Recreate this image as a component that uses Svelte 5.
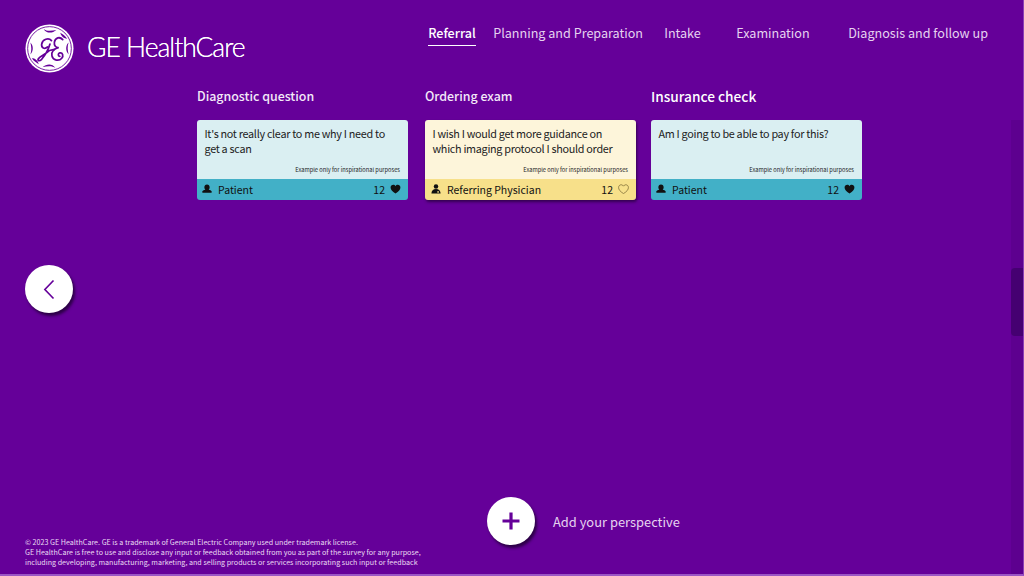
<script lang="ts">
	const navItems = [
		{ label: 'Referral', active: true },
		{ label: 'Planning and Preparation' },
		{ label: 'Intake' },
		{ label: 'Examination' },
		{ label: 'Diagnosis and follow up' }
	];

	const columns = [
		{
			title: 'Diagnostic question',
			text: "It's not really clear to me why I need to get a scan",
			role: 'Patient',
			tone: 'patient',
			liked: true
		},
		{
			title: 'Ordering exam',
			text: 'I wish I would get more guidance on which imaging protocol I should order',
			role: 'Referring Physician',
			tone: 'physician',
			liked: false
		},
		{
			title: 'Insurance check',
			text: 'Am I going to be able to pay for this?',
			role: 'Patient',
			tone: 'patient',
			liked: true,
			big: true
		}
	];

	const HEART = 'M6.5 11.5 C2.5 9 0.6 6.8 0.6 4.2 C0.6 2.2 2.1 0.9 3.8 0.9 C4.9 0.9 5.9 1.5 6.5 2.6 C7.1 1.5 8.1 0.9 9.2 0.9 C10.9 0.9 12.4 2.2 12.4 4.2 C12.4 6.8 10.5 9 6.5 11.5 Z';
</script>

<div class="page">
	<header class="top">
		<div class="brand">
			<svg class="mark" viewBox="0 0 50 50" aria-hidden="true">
				<circle cx="25" cy="25" r="24.5" fill="#fff" />
				<circle cx="25" cy="25" r="22.300" fill="none" stroke="#650099" stroke-width="0.9" />
				<g fill="#650099">
					<path d="M19 5 C22 7.500 27 7 32 6 C28 9.500 22 10 19 5 Z" />
					<path d="M36 9 C39 11 41 12 43 15 C40 15 37 13 36 9 Z" />
					<path d="M44.500 19 C43 23 43.500 27 44.500 31 C41.500 28 41 22.500 44.500 19 Z" />
					<path d="M5.500 31 C7 27 6.500 23 5.500 19 C8.500 22 9 27.500 5.500 31 Z" />
					<path d="M31 45 C28 42.500 23 43 18 44 C22 40.500 28 40 31 45 Z" />
					<path d="M14 41 C11 39 9 38 7 35 C10 35 13 37 14 41 Z" />
				</g>
				<g fill="none" stroke="#650099" stroke-width="1.800" stroke-linecap="round">
					<path d="M27 17 C24 13.500 18 15.500 17 20.500 C16.500 24.500 20 26 23 23.500" />
					<path d="M25.500 20.500 C23.500 27 20.500 32 17 36 C14.500 38.500 12 37.500 14 35 C16.500 32.500 21 31 25 27 L30 26" />
					<path d="M38.500 16 C35.500 12.500 31 14 30 18.500 C29.500 22 31.500 24.500 34.500 24 C29.500 25.500 26.500 28.500 27.500 32.500 C28.500 37.500 35 38 37.500 35 C39.500 32.500 38.500 29 35.500 29.500 C33.500 30 33.500 33 35.500 33" />
				</g>
			</svg>
			<span class="wordmark">GE HealthCare</span>
		</div>
		<nav class="tabs">
			{#each navItems as item}
				<span class="tab" class:active={item.active}>{item.label}</span>
			{/each}
		</nav>
	</header>

	<div class="stage">
		<button class="round back" aria-label="Back">
			<svg viewBox="0 0 16 28" width="12" height="21" aria-hidden="true">
				<path d="M14 2 L2.500 14 L14 26" fill="none" stroke="#650099" stroke-width="2.200" />
			</svg>
		</button>

		<section class="board">
			{#each columns as col}
				<div class="col">
					<h2 class:big={col.big}>{col.title}</h2>
					<article class="card {col.tone}">
						<div class="body">
							<p>{col.text}</p>
							<small>Example only for inspirational purposes</small>
						</div>
						<div class="foot">
							<svg class="who" viewBox="0 0 12 12" aria-hidden="true">
								{#if col.tone === 'physician'}
									<circle cx="6" cy="3" r="2.700" fill="#111" />
									<path d="M0.500 11.500 C0.500 8 2.500 6 6 6 C9.500 6 11.500 8 11.500 11.500 Z" fill="#111" />
									<circle cx="8.500" cy="9.500" r="1" fill="#f7e08a" />
								{:else}
									<path d="M6 0.500 C8 0.500 9.200 2 9.200 4 C9.200 5.300 8.700 6.200 8 6.900 C10 7.400 11.800 8.200 11.800 9.600 C11.800 10.300 11.300 10.500 10.700 10.500 H1.300 C0.700 10.500 0.200 10.300 0.200 9.600 C0.200 8.200 2 7.400 4 6.900 C3.300 6.200 2.800 5.300 2.800 4 C2.800 2 4 0.500 6 0.500 Z" fill="#111" />
								{/if}
							</svg>
							<span class="role">{col.role}</span>
							<span class="count">12</span>
							<svg class="heart" viewBox="0 0 13 12" aria-hidden="true">
								{#if col.liked}
									<path d={HEART} fill="#111" />
								{:else}
									<path d={HEART} fill="none" stroke="#6b5a2a" stroke-width="0.800" />
								{/if}
							</svg>
						</div>
					</article>
				</div>
			{/each}
		</section>
	</div>

	<footer class="bottom">
		<p class="legal">
			© 2023 GE HealthCare. GE is a trademark of General Electric Company used under trademark license.<br />
			GE HealthCare is free to use and disclose any input or feedback obtained from you as part of the survey for any purpose,<br />
			including developing, manufacturing, marketing, and selling products or services incorporating such input or feedback
		</p>
		<div class="add">
			<button class="round" aria-label="Add your perspective">
				<svg viewBox="0 0 18 18" width="18" height="18" aria-hidden="true">
					<path d="M9 0.500 V17.500 M0.500 9 H17.500" stroke="#650099" stroke-width="3.200" />
				</svg>
			</button>
			<span>Add your perspective</span>
		</div>
	</footer>

	<div class="scrollbar" aria-hidden="true"><div class="thumb"></div></div>
</div>

<style>
	:global(body) {
		margin: 0;
		background: #650099;
	}

	.page {
		position: relative;
		width: 1024px;
		height: 576px;
		box-sizing: border-box;
		display: flex;
		flex-direction: column;
		overflow: hidden;
		background: #650099;
		border-right: 1px solid #8b3fb5;
		border-bottom: 2px solid #9a55c4;
		color: #fff;
		font-family: 'Noto Sans CJK SC', 'Noto Sans', sans-serif;
	}

	.top {
		display: flex;
		justify-content: space-between;
		height: 87px;
		padding: 24px 35px 0 25px;
		box-sizing: border-box;
	}

	.brand {
		display: flex;
		align-items: flex-start;
		gap: 13px;
	}

	.mark {
		width: 49px;
		height: 49px;
		flex: none;
	}

	.wordmark {
		margin-top: 5px;
		font-family: 'Lato', sans-serif;
		font-weight: 300;
		font-size: 26.500px;
		line-height: 36px;
		white-space: nowrap;
		letter-spacing: -1px;
		text-shadow: 0 0 0.5px #fff;
	}

	.tabs {
		display: grid;
		grid-template-columns: 65px 171px 72px 112px auto;
		height: 23px;
		margin-top: -1px;
		font-size: 12.600px;
		line-height: 20px;
	}

	.tab {
		justify-self: start;
		height: 22px;
		color: #e6d3f0;
		white-space: nowrap;
	}

	.tab.active {
		color: #fff;
		font-weight: 500;
		border-bottom: 1px solid #fff;
	}

	.stage {
		flex: 1;
		display: flex;
		padding-left: 25px;
	}

	.round {
		width: 48px;
		height: 48px;
		flex: none;
		padding: 0;
		border: 0;
		border-radius: 50%;
		background: #fff;
		display: flex;
		align-items: center;
		justify-content: center;
		box-shadow: 2px 3px 3px rgba(30, 0, 50, 0.8);
	}

	.back {
		margin-top: 178px;
		margin-right: 124px;
	}

	.board {
		display: grid;
		grid-template-columns: 228px 226px 211px;
		align-items: start;
	}

	.col {
		width: 211px;
	}

	h2 {
		margin: 0 0 14px;
		height: 19px;
		font-size: 12.400px;
		font-weight: 500;
		line-height: 19px;
		color: #f3e9f8;
	}

	h2.big {
		font-size: 13.700px;
		color: #fff;
	}

	.card {
		border-radius: 3px;
		overflow: hidden;
		color: #222;
	}

	.card.physician {
		box-shadow: 1px 2px 3px rgba(30, 0, 50, 0.7);
	}

	.body {
		height: 59px;
		box-sizing: border-box;
		padding: 6px 8px 0 7.500px;
		display: flex;
		flex-direction: column;
	}

	.patient .body {
		background: #daeff2;
	}

	.physician .body {
		background: #fdf5da;
	}

	.body p {
		margin: 0;
		height: 39px;
		font-size: 10.800px;
		letter-spacing: -0.290px;
		line-height: 15px;
	}

	.body small {
		align-self: flex-end;
		font-size: 5.700px;
		line-height: 9px;
		color: #222;
	}

	.foot {
		height: 21px;
		box-sizing: border-box;
		padding: 0 7px 1px 5px;
		display: flex;
		align-items: center;
		font-size: 10.500px;
		color: #111;
	}

	.patient .foot {
		background: #42b0c7;
	}

	.physician .foot {
		background: #f7e08a;
	}

	.who {
		width: 10px;
		height: 10px;
		margin-right: 6px;
	}

	.physician .who {
		margin-left: 1px;
	}

	.role {
		flex: 1;
	}

	.count {
		margin-right: 5px;
	}

	.heart {
		width: 11px;
		height: 10px;
	}

	.bottom {
		display: flex;
		align-items: flex-end;
		height: 79px;
		padding: 0 0 7px 25px;
		box-sizing: border-box;
	}

	.legal {
		width: 462px;
		margin: 0;
		flex: none;
		font-size: 7.150px;
		line-height: 10px;
		color: #eadcf2;
		white-space: nowrap;
	}

	.add {
		display: flex;
		align-items: center;
		gap: 18px;
		margin-bottom: 22px;
		font-size: 12.900px;
		color: #e6d3f0;
	}

	.scrollbar {
		position: absolute;
		top: 120px;
		right: 0;
		bottom: 0;
		width: 12px;
		background: rgba(60, 0, 100, 0.18);
	}

	.thumb {
		margin-top: 148px;
		height: 68px;
		border-radius: 4px 0 0 4px;
		background: rgba(50, 0, 90, 0.55);
	}
</style>
